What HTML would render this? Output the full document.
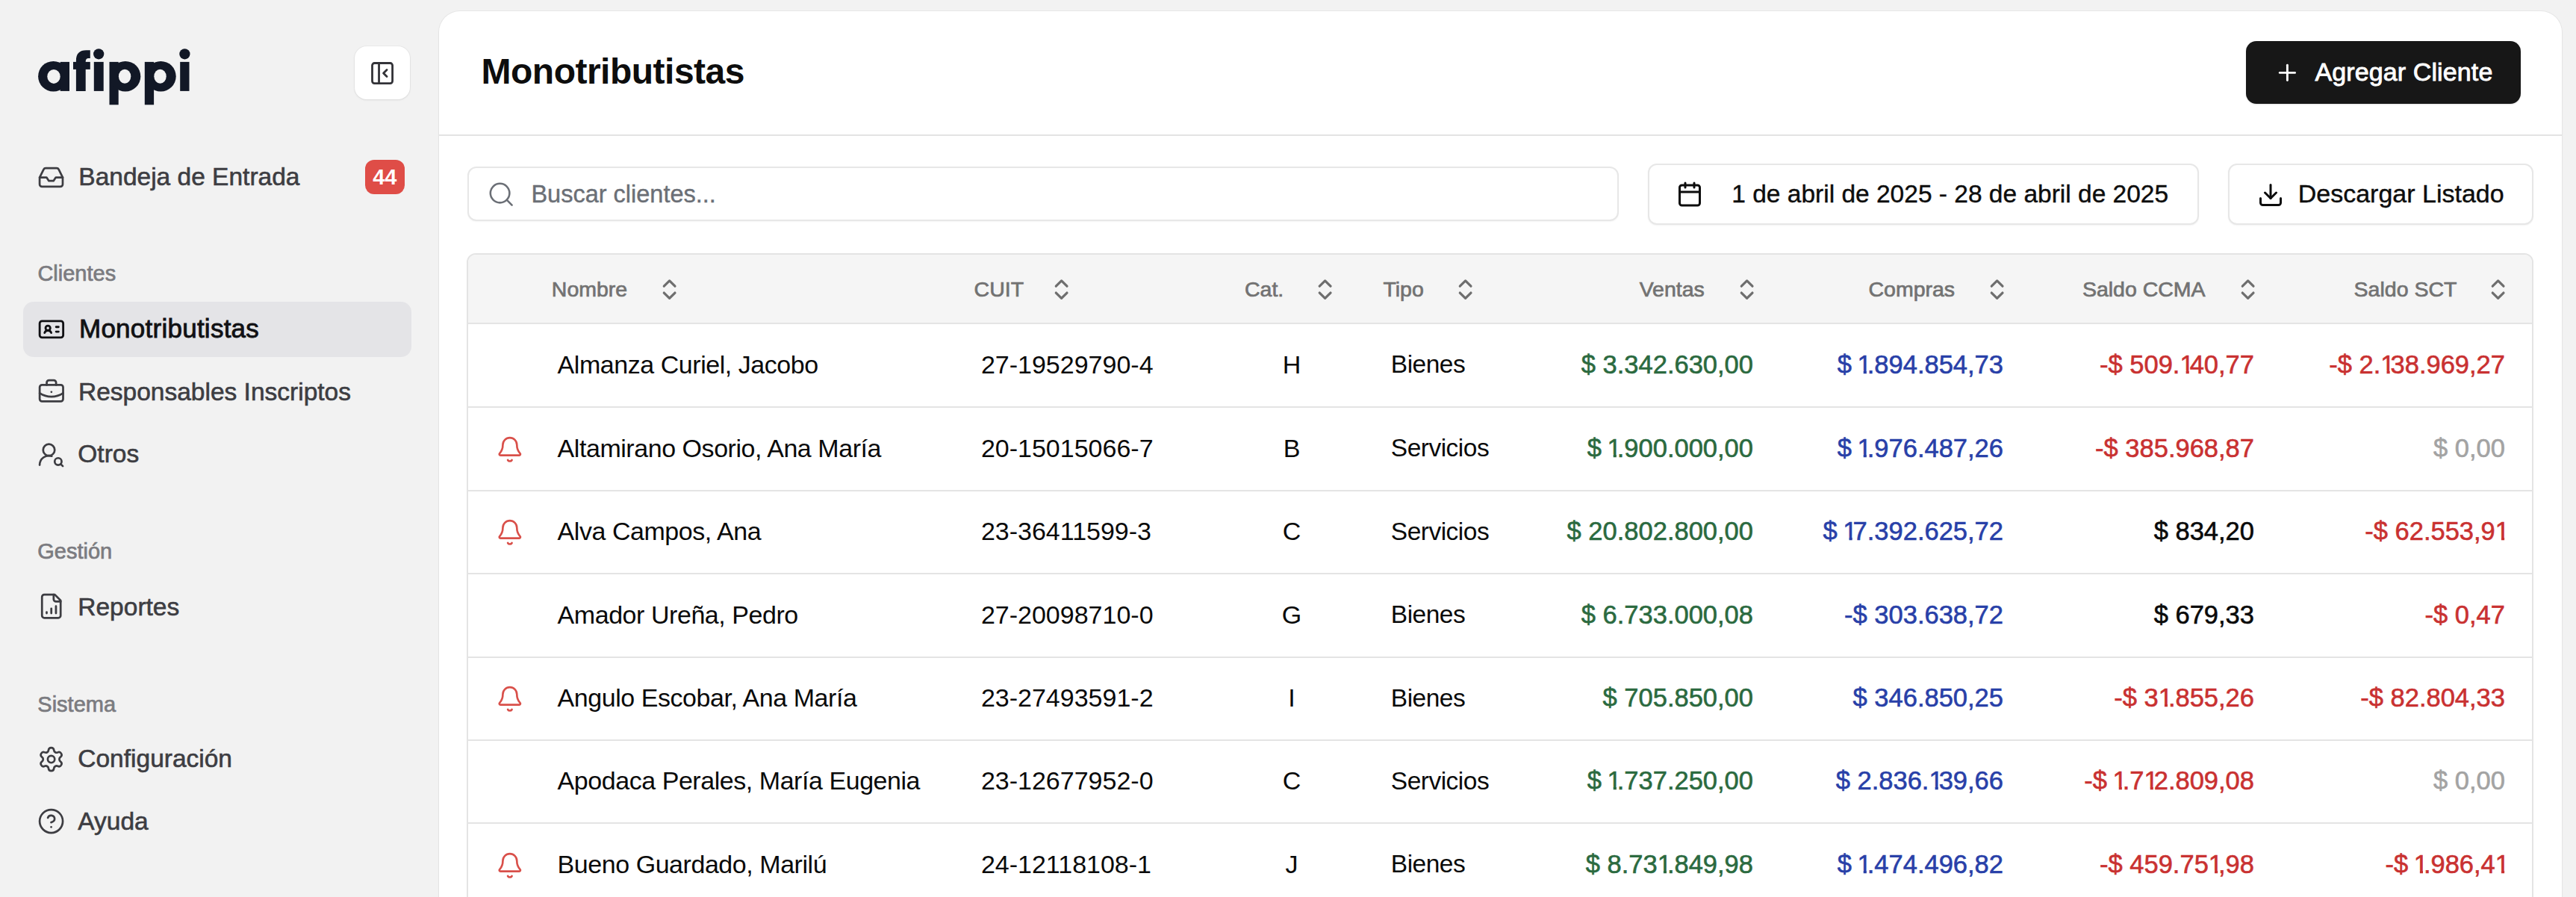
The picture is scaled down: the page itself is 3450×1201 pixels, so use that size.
<!DOCTYPE html>
<html><head><meta charset="utf-8"><title>afippi - Monotributistas</title>
<style>
html,body{margin:0;padding:0;}
body{width:3450px;height:1201px;overflow:hidden;position:relative;background:#f2f2f2;font-family:"Liberation Sans", sans-serif;}
.t{position:absolute;white-space:nowrap;line-height:1;}
.ic{position:absolute;overflow:visible;}
.box{position:absolute;box-sizing:border-box;}
.n1{display:inline-block;letter-spacing:-6px;clip-path:polygon(0 0,12.3px 0,12.3px 40px,8.2px 40px,8.2px 25.4px,0 25.4px);}
.sp{margin-left:-2px;}
</style></head><body>
<svg class="ic" style="left:0;top:0;width:300px;height:160px" viewBox="0 0 300 160">
<g fill="#121826">
<ellipse cx="71.5" cy="102.2" rx="20.4" ry="20.3"/>
<rect x="80.7" y="82.9" width="12.3" height="39"/>
<path d="M101.9,121.9 V81 Q101.9,67.3 115.5,67.3 H120.8 V78 H118.5 Q114.7,78 114.7,82.5 V121.9 Z"/>
<rect x="98" y="82.9" width="22.8" height="10"/>
<rect x="125.8" y="82.9" width="12.9" height="39"/>
<circle cx="132.2" cy="72.3" r="7.1"/>
<rect x="146.5" y="82.9" width="12.2" height="57.4"/>
<ellipse cx="167.9" cy="102.2" rx="20.4" ry="20.3"/>
<rect x="193.8" y="82.9" width="12.3" height="57.4"/>
<ellipse cx="215.3" cy="102.2" rx="20.4" ry="20.3"/>
<rect x="241.2" y="82.9" width="12.3" height="39"/>
<circle cx="247.4" cy="72.3" r="7.1"/>
</g>
<g fill="#f2f2f2">
<ellipse cx="72" cy="102.4" rx="8.7" ry="9.5"/>
<ellipse cx="167.1" cy="102.3" rx="8.2" ry="9.5"/>
<ellipse cx="214.5" cy="102.3" rx="8.2" ry="9.5"/>
</g>
</svg>
<div class="box" style="left:475px;top:62px;width:74px;height:71px;background:#fff;border-radius:16px;box-shadow:0 1px 3px rgba(0,0,0,0.08),0 0 0 1px rgba(0,0,0,0.03)"></div>
<svg class="ic" style="left:493.70px;top:79.90px;width:36.12px;height:36.12px" viewBox="0 0 24 24" fill="none" stroke="#333338" stroke-width="1.86" stroke-linecap="round" stroke-linejoin="round"><rect width="18" height="18" x="3" y="3" rx="2"/><path d="M9 3v18"/><path d="m16 15-3-3 3-3"/></svg>
<svg class="ic" style="left:49.80px;top:218.50px;width:37.08px;height:37.08px" viewBox="0 0 24 24" fill="none" stroke="#3d3d42" stroke-width="1.75" stroke-linecap="round" stroke-linejoin="round"><polyline points="22 12 16 12 14 15 10 15 8 12 2 12"/><path d="M5.45 5.11 2 12v6a2 2 0 0 0 2 2h16a2 2 0 0 0 2-2v-6l-3.45-6.89A2 2 0 0 0 16.76 4H7.24a2 2 0 0 0-1.79 1.11z"/></svg>
<div class="t" style="top:219.84px;font-size:33.5px;color:#3d3d42;font-weight:400;-webkit-text-stroke:0.6px #3d3d42;left:105.30px;">Bandeja de Entrada</div>
<div class="box" style="left:489px;top:214px;width:53px;height:46px;background:#df4d47;border-radius:12px"></div>
<div class="t" style="top:223.25px;font-size:29px;color:#fff;font-weight:700;left:15.30px;width:1000px;text-align:center;">44</div>
<div class="t" style="top:352.25px;font-size:29px;color:#7b7b80;font-weight:400;-webkit-text-stroke:0.7px #7b7b80;left:50.40px;">Clientes</div>
<div class="t" style="top:724.45px;font-size:29px;color:#7b7b80;font-weight:400;-webkit-text-stroke:0.7px #7b7b80;left:50.30px;">Gestión</div>
<div class="t" style="top:929.45px;font-size:29px;color:#7b7b80;font-weight:400;-webkit-text-stroke:0.7px #7b7b80;left:50.30px;">Sistema</div>
<div class="box" style="left:31px;top:404px;width:520px;height:74px;background:#e4e4e7;border-radius:14px"></div>
<svg class="ic" style="left:49.80px;top:422.40px;width:37.80px;height:37.80px" viewBox="0 0 24 24" fill="none" stroke="#111114" stroke-width="1.8" stroke-linecap="round" stroke-linejoin="round"><path d="M16 10h2"/><path d="M16 14h2"/><path d="M6.17 15a3 3 0 0 1 5.66 0"/><circle cx="9" cy="11" r="2"/><rect x="2" y="5" width="20" height="14" rx="2"/></svg>
<div class="t" style="top:422.37px;font-size:35px;color:#111114;font-weight:400;-webkit-text-stroke:0.85px #111114;letter-spacing:0.25px;left:106.00px;">Monotributistas</div>
<svg class="ic" style="left:49.80px;top:505.90px;width:37.68px;height:37.68px" viewBox="0 0 24 24" fill="none" stroke="#3d3d42" stroke-width="1.75" stroke-linecap="round" stroke-linejoin="round"><path d="M12 12h.01"/><path d="M16 6V4a2 2 0 0 0-2-2h-4a2 2 0 0 0-2 2v2"/><path d="M22 13a18.15 18.15 0 0 1-20 0"/><rect width="20" height="14" x="2" y="6" rx="2"/></svg>
<div class="t" style="top:507.54px;font-size:33.5px;color:#3d3d42;font-weight:400;-webkit-text-stroke:0.6px #3d3d42;left:105.00px;">Responsables Inscriptos</div>
<svg class="ic" style="left:50.10px;top:589.90px;width:37.20px;height:37.20px" viewBox="0 0 24 24" fill="none" stroke="#3d3d42" stroke-width="1.75" stroke-linecap="round" stroke-linejoin="round"><circle cx="10" cy="8" r="5"/><path d="M2 21a8 8 0 0 1 10.434-7.62"/><circle cx="18" cy="18" r="3"/><path d="m22 22-1.9-1.9"/></svg>
<div class="t" style="top:591.44px;font-size:33.5px;color:#3d3d42;font-weight:400;-webkit-text-stroke:0.6px #3d3d42;left:104.30px;">Otros</div>
<svg class="ic" style="left:49.80px;top:793.30px;width:37.44px;height:37.44px" viewBox="0 0 24 24" fill="none" stroke="#3d3d42" stroke-width="1.75" stroke-linecap="round" stroke-linejoin="round"><path d="M15 2H6a2 2 0 0 0-2 2v16a2 2 0 0 0 2 2h12a2 2 0 0 0 2-2V7Z"/><path d="M14 2v4a2 2 0 0 0 2 2h4"/><path d="M8 18v-1"/><path d="M12 18v-4"/><path d="M16 18v-6"/></svg>
<div class="t" style="top:795.64px;font-size:33.5px;color:#3d3d42;font-weight:400;-webkit-text-stroke:0.6px #3d3d42;left:104.30px;">Reportes</div>
<svg class="ic" style="left:50.00px;top:997.70px;width:37.20px;height:37.20px" viewBox="0 0 24 24" fill="none" stroke="#3d3d42" stroke-width="1.75" stroke-linecap="round" stroke-linejoin="round"><path d="M9.671 4.136a2.34 2.34 0 0 1 4.659 0 2.34 2.34 0 0 0 3.319 1.915 2.34 2.34 0 0 1 2.33 4.033 2.34 2.34 0 0 0 0 3.831 2.34 2.34 0 0 1-2.33 4.033 2.34 2.34 0 0 0-3.319 1.915 2.34 2.34 0 0 1-4.659 0 2.34 2.34 0 0 0-3.32-1.915 2.34 2.34 0 0 1-2.33-4.033 2.34 2.34 0 0 0 0-3.831A2.34 2.34 0 0 1 6.35 6.051a2.34 2.34 0 0 0 3.319-1.915"/><circle cx="12" cy="12" r="3"/></svg>
<div class="t" style="top:998.94px;font-size:33.5px;color:#3d3d42;font-weight:400;-webkit-text-stroke:0.6px #3d3d42;left:104.30px;">Configuración</div>
<svg class="ic" style="left:49.90px;top:1081.40px;width:37.20px;height:37.20px" viewBox="0 0 24 24" fill="none" stroke="#3d3d42" stroke-width="1.75" stroke-linecap="round" stroke-linejoin="round"><circle cx="12" cy="12" r="10"/><path d="M9.09 9a3 3 0 0 1 5.83 1c0 2-3 3-3 3"/><path d="M12 17h.01"/></svg>
<div class="t" style="top:1082.64px;font-size:33.5px;color:#3d3d42;font-weight:400;-webkit-text-stroke:0.6px #3d3d42;left:104.30px;">Ayuda</div>
<div class="box" style="left:588px;top:15px;width:2843px;height:1300px;background:#fff;border-radius:28px;box-shadow:0 0 0 1px rgba(0,0,0,0.045),0 1px 3px rgba(0,0,0,0.04)"></div>
<div class="t" style="top:72.16px;font-size:48px;color:#0d0d0d;font-weight:700;letter-spacing:-0.5px;left:644.50px;">Monotributistas</div>
<div class="box" style="left:3008px;top:55px;width:368px;height:84px;background:#171717;border-radius:14px;box-shadow:0 1px 2px rgba(0,0,0,0.12)"></div>
<svg class="ic" style="left:3045.90px;top:80.10px;width:34.80px;height:34.80px" viewBox="0 0 24 24" fill="none" stroke="#fff" stroke-width="2" stroke-linecap="round" stroke-linejoin="round"><path d="M5 12h14"/><path d="M12 5v14"/></svg>
<div class="t" style="top:79.31px;font-size:34px;color:#fff;font-weight:400;-webkit-text-stroke:0.85px #fff;letter-spacing:0.12px;left:3100.40px;">Agregar Cliente</div>
<div class="box" style="left:588px;top:180px;width:2843px;height:2px;background:#e3e3e3"></div>
<div class="box" style="left:626px;top:223px;width:1542px;height:73px;background:#fff;border:2px solid #e7e7e7;border-radius:12px;box-shadow:0 1px 2px rgba(0,0,0,0.04)"></div>
<svg class="ic" style="left:652.20px;top:240.60px;width:38.40px;height:38.40px" viewBox="0 0 24 24" fill="none" stroke="#6b6f76" stroke-width="1.6" stroke-linecap="round" stroke-linejoin="round"><circle cx="11" cy="11" r="8"/><path d="m21 21-4.3-4.3"/></svg>
<div class="t" style="top:244.08px;font-size:32.5px;color:#6b6f76;font-weight:400;-webkit-text-stroke:0.4px #6b6f76;left:711.40px;">Buscar clientes...</div>
<div class="box" style="left:2207px;top:219px;width:738px;height:82px;background:#fff;border:2px solid #e7e7e7;border-radius:12px;box-shadow:0 1px 2px rgba(0,0,0,0.05)"></div>
<svg class="ic" style="left:2245.40px;top:242.40px;width:36.00px;height:36.00px" viewBox="0 0 24 24" fill="none" stroke="#0d0d0d" stroke-width="2" stroke-linecap="round" stroke-linejoin="round"><path d="M8 2v4"/><path d="M16 2v4"/><rect width="18" height="18" x="3" y="4" rx="2"/><path d="M3 10h18"/></svg>
<div class="t" style="top:242.64px;font-size:33.5px;color:#0d0d0d;font-weight:400;-webkit-text-stroke:0.4px #0d0d0d;left:2319.30px;">1 de abril de 2025 - 28 de abril de 2025</div>
<div class="box" style="left:2984px;top:219px;width:409px;height:82px;background:#fff;border:2px solid #e7e7e7;border-radius:12px;box-shadow:0 1px 2px rgba(0,0,0,0.05)"></div>
<svg class="ic" style="left:3022.60px;top:242.50px;width:36.00px;height:36.00px" viewBox="0 0 24 24" fill="none" stroke="#0d0d0d" stroke-width="2" stroke-linecap="round" stroke-linejoin="round"><path d="M21 15v4a2 2 0 0 1-2 2H5a2 2 0 0 1-2-2v-4"/><polyline points="7 10 12 15 17 10"/><line x1="12" x2="12" y1="15" y2="3"/></svg>
<div class="t" style="top:242.11px;font-size:34px;color:#0d0d0d;font-weight:400;-webkit-text-stroke:0.4px #0d0d0d;left:3077.70px;">Descargar Listado</div>
<div class="box" style="left:625px;top:339px;width:2768px;height:900px;background:#fff;border:2px solid #e4e4e4;border-radius:12px;overflow:hidden"><div style="position:absolute;left:0;top:0;right:0;height:92px;background:#f5f5f5"></div></div>
<div class="box" style="left:627px;top:432px;width:2764px;height:2px;background:#e4e4e4"></div>
<div class="box" style="left:627px;top:544px;width:2764px;height:2px;background:#e4e4e4"></div>
<div class="box" style="left:627px;top:656px;width:2764px;height:2px;background:#e4e4e4"></div>
<div class="box" style="left:627px;top:767px;width:2764px;height:2px;background:#e4e4e4"></div>
<div class="box" style="left:627px;top:879px;width:2764px;height:2px;background:#e4e4e4"></div>
<div class="box" style="left:627px;top:990px;width:2764px;height:2px;background:#e4e4e4"></div>
<div class="box" style="left:627px;top:1101px;width:2764px;height:2px;background:#e4e4e4"></div>
<div class="t" style="top:372.77px;font-size:28.5px;color:#727272;font-weight:400;-webkit-text-stroke:0.7px #727272;left:738.80px;">Nombre</div>
<svg class="ic" style="left:879.06px;top:369.76px;width:35.28px;height:35.28px" viewBox="0 0 24 24" fill="none" stroke="#6e6e6e" stroke-width="2.2" stroke-linecap="round" stroke-linejoin="round"><path d="m7 15 5 5 5-5"/><path d="m7 9 5-5 5 5"/></svg>
<div class="t" style="top:372.77px;font-size:28.5px;color:#727272;font-weight:400;-webkit-text-stroke:0.7px #727272;left:1304.60px;">CUIT</div>
<svg class="ic" style="left:1404.36px;top:369.76px;width:35.28px;height:35.28px" viewBox="0 0 24 24" fill="none" stroke="#6e6e6e" stroke-width="2.2" stroke-linecap="round" stroke-linejoin="round"><path d="m7 15 5 5 5-5"/><path d="m7 9 5-5 5 5"/></svg>
<div class="t" style="top:372.77px;font-size:28.5px;color:#727272;font-weight:400;-webkit-text-stroke:0.7px #727272;left:1667.00px;">Cat.</div>
<svg class="ic" style="left:1756.86px;top:369.76px;width:35.28px;height:35.28px" viewBox="0 0 24 24" fill="none" stroke="#6e6e6e" stroke-width="2.2" stroke-linecap="round" stroke-linejoin="round"><path d="m7 15 5 5 5-5"/><path d="m7 9 5-5 5 5"/></svg>
<div class="t" style="top:372.77px;font-size:28.5px;color:#727272;font-weight:400;-webkit-text-stroke:0.7px #727272;left:1852.40px;">Tipo</div>
<svg class="ic" style="left:1944.96px;top:369.76px;width:35.28px;height:35.28px" viewBox="0 0 24 24" fill="none" stroke="#6e6e6e" stroke-width="2.2" stroke-linecap="round" stroke-linejoin="round"><path d="m7 15 5 5 5-5"/><path d="m7 9 5-5 5 5"/></svg>
<div class="t" style="top:372.77px;font-size:28.5px;color:#727272;font-weight:400;-webkit-text-stroke:0.7px #727272;right:1167.20px;">Ventas</div>
<svg class="ic" style="left:2321.66px;top:369.76px;width:35.28px;height:35.28px" viewBox="0 0 24 24" fill="none" stroke="#6e6e6e" stroke-width="2.2" stroke-linecap="round" stroke-linejoin="round"><path d="m7 15 5 5 5-5"/><path d="m7 9 5-5 5 5"/></svg>
<div class="t" style="top:372.77px;font-size:28.5px;color:#727272;font-weight:400;-webkit-text-stroke:0.7px #727272;right:831.90px;">Compras</div>
<svg class="ic" style="left:2656.76px;top:369.76px;width:35.28px;height:35.28px" viewBox="0 0 24 24" fill="none" stroke="#6e6e6e" stroke-width="2.2" stroke-linecap="round" stroke-linejoin="round"><path d="m7 15 5 5 5-5"/><path d="m7 9 5-5 5 5"/></svg>
<div class="t" style="top:372.77px;font-size:28.5px;color:#727272;font-weight:400;-webkit-text-stroke:0.7px #727272;right:496.40px;">Saldo CCMA</div>
<svg class="ic" style="left:2992.76px;top:369.76px;width:35.28px;height:35.28px" viewBox="0 0 24 24" fill="none" stroke="#6e6e6e" stroke-width="2.2" stroke-linecap="round" stroke-linejoin="round"><path d="m7 15 5 5 5-5"/><path d="m7 9 5-5 5 5"/></svg>
<div class="t" style="top:372.77px;font-size:28.5px;color:#727272;font-weight:400;-webkit-text-stroke:0.7px #727272;right:159.60px;">Saldo SCT</div>
<svg class="ic" style="left:3327.86px;top:369.76px;width:35.28px;height:35.28px" viewBox="0 0 24 24" fill="none" stroke="#6e6e6e" stroke-width="2.2" stroke-linecap="round" stroke-linejoin="round"><path d="m7 15 5 5 5-5"/><path d="m7 9 5-5 5 5"/></svg>
<div class="t" style="top:470.71px;font-size:34px;color:#0a0a0a;font-weight:400;letter-spacing:-0.45px;left:746.60px;">Almanza Curiel, Jacobo</div>
<div class="t" style="top:470.71px;font-size:34px;color:#0a0a0a;font-weight:400;left:1313.90px;">27-19529790-4</div>
<div class="t" style="top:470.71px;font-size:34px;color:#0a0a0a;font-weight:400;left:1230.00px;width:1000px;text-align:center;">H</div>
<div class="t" style="top:471.14px;font-size:33.5px;color:#0a0a0a;font-weight:400;letter-spacing:-0.5px;left:1862.80px;">Bienes</div>
<div class="t" style="top:470.89px;font-size:34.5px;color:#2b6a3f;font-weight:400;-webkit-text-stroke:0.6px #2b6a3f;right:1102.00px;">$ 3.342.630,00</div>
<div class="t" style="top:470.89px;font-size:34.5px;color:#2840a8;font-weight:400;-webkit-text-stroke:0.6px #2840a8;right:767.00px;">$ <span class="n1 sp">1</span>.894.854,73</div>
<div class="t" style="top:470.89px;font-size:34.5px;color:#c93131;font-weight:400;-webkit-text-stroke:0.6px #c93131;right:431.00px;">-$ 509.<span class="n1">1</span>40,77</div>
<div class="t" style="top:470.89px;font-size:34.5px;color:#c93131;font-weight:400;-webkit-text-stroke:0.6px #c93131;right:95.00px;">-$ 2.<span class="n1">1</span>38.969,27</div>
<svg class="ic" style="left:663.90px;top:582.70px;width:37.68px;height:37.68px" viewBox="0 0 24 24" fill="none" stroke="#d9504a" stroke-width="1.7" stroke-linecap="round" stroke-linejoin="round"><path d="M10.268 21a2 2 0 0 0 3.464 0"/><path d="M3.262 15.326A1 1 0 0 0 4 17h16a1 1 0 0 0 .74-1.673C19.41 13.956 18 12.499 18 8A6 6 0 0 0 6 8c0 4.499-1.411 5.956-2.738 7.326"/></svg>
<div class="t" style="top:582.71px;font-size:34px;color:#0a0a0a;font-weight:400;letter-spacing:-0.45px;left:746.60px;">Altamirano Osorio, Ana María</div>
<div class="t" style="top:582.71px;font-size:34px;color:#0a0a0a;font-weight:400;left:1313.90px;">20-15015066-7</div>
<div class="t" style="top:582.71px;font-size:34px;color:#0a0a0a;font-weight:400;left:1230.00px;width:1000px;text-align:center;">B</div>
<div class="t" style="top:583.14px;font-size:33.5px;color:#0a0a0a;font-weight:400;letter-spacing:-0.5px;left:1862.80px;">Servicios</div>
<div class="t" style="top:582.89px;font-size:34.5px;color:#2b6a3f;font-weight:400;-webkit-text-stroke:0.6px #2b6a3f;right:1102.00px;">$ <span class="n1 sp">1</span>.900.000,00</div>
<div class="t" style="top:582.89px;font-size:34.5px;color:#2840a8;font-weight:400;-webkit-text-stroke:0.6px #2840a8;right:767.00px;">$ <span class="n1 sp">1</span>.976.487,26</div>
<div class="t" style="top:582.89px;font-size:34.5px;color:#c93131;font-weight:400;-webkit-text-stroke:0.6px #c93131;right:431.00px;">-$ 385.968,87</div>
<div class="t" style="top:582.89px;font-size:34.5px;color:#a3a3a3;font-weight:400;-webkit-text-stroke:0.6px #a3a3a3;right:95.00px;">$ 0,00</div>
<svg class="ic" style="left:663.90px;top:694.20px;width:37.68px;height:37.68px" viewBox="0 0 24 24" fill="none" stroke="#d9504a" stroke-width="1.7" stroke-linecap="round" stroke-linejoin="round"><path d="M10.268 21a2 2 0 0 0 3.464 0"/><path d="M3.262 15.326A1 1 0 0 0 4 17h16a1 1 0 0 0 .74-1.673C19.41 13.956 18 12.499 18 8A6 6 0 0 0 6 8c0 4.499-1.411 5.956-2.738 7.326"/></svg>
<div class="t" style="top:694.21px;font-size:34px;color:#0a0a0a;font-weight:400;letter-spacing:-0.45px;left:746.60px;">Alva Campos, Ana</div>
<div class="t" style="top:694.21px;font-size:34px;color:#0a0a0a;font-weight:400;left:1313.90px;">23-36411599-3</div>
<div class="t" style="top:694.21px;font-size:34px;color:#0a0a0a;font-weight:400;left:1230.00px;width:1000px;text-align:center;">C</div>
<div class="t" style="top:694.64px;font-size:33.5px;color:#0a0a0a;font-weight:400;letter-spacing:-0.5px;left:1862.80px;">Servicios</div>
<div class="t" style="top:694.39px;font-size:34.5px;color:#2b6a3f;font-weight:400;-webkit-text-stroke:0.6px #2b6a3f;right:1102.00px;">$ 20.802.800,00</div>
<div class="t" style="top:694.39px;font-size:34.5px;color:#2840a8;font-weight:400;-webkit-text-stroke:0.6px #2840a8;right:767.00px;">$ <span class="n1 sp">1</span>7.392.625,72</div>
<div class="t" style="top:694.39px;font-size:34.5px;color:#0a0a0a;font-weight:400;-webkit-text-stroke:0.6px #0a0a0a;right:431.00px;">$ 834,20</div>
<div class="t" style="top:694.39px;font-size:34.5px;color:#c93131;font-weight:400;-webkit-text-stroke:0.6px #c93131;right:95.00px;">-$ 62.553,9<span class="n1">1</span></div>
<div class="t" style="top:805.71px;font-size:34px;color:#0a0a0a;font-weight:400;letter-spacing:-0.45px;left:746.60px;">Amador Ureña, Pedro</div>
<div class="t" style="top:805.71px;font-size:34px;color:#0a0a0a;font-weight:400;left:1313.90px;">27-20098710-0</div>
<div class="t" style="top:805.71px;font-size:34px;color:#0a0a0a;font-weight:400;left:1230.00px;width:1000px;text-align:center;">G</div>
<div class="t" style="top:806.14px;font-size:33.5px;color:#0a0a0a;font-weight:400;letter-spacing:-0.5px;left:1862.80px;">Bienes</div>
<div class="t" style="top:805.89px;font-size:34.5px;color:#2b6a3f;font-weight:400;-webkit-text-stroke:0.6px #2b6a3f;right:1102.00px;">$ 6.733.000,08</div>
<div class="t" style="top:805.89px;font-size:34.5px;color:#2840a8;font-weight:400;-webkit-text-stroke:0.6px #2840a8;right:767.00px;">-$ 303.638,72</div>
<div class="t" style="top:805.89px;font-size:34.5px;color:#0a0a0a;font-weight:400;-webkit-text-stroke:0.6px #0a0a0a;right:431.00px;">$ 679,33</div>
<div class="t" style="top:805.89px;font-size:34.5px;color:#c93131;font-weight:400;-webkit-text-stroke:0.6px #c93131;right:95.00px;">-$ 0,47</div>
<svg class="ic" style="left:663.90px;top:917.20px;width:37.68px;height:37.68px" viewBox="0 0 24 24" fill="none" stroke="#d9504a" stroke-width="1.7" stroke-linecap="round" stroke-linejoin="round"><path d="M10.268 21a2 2 0 0 0 3.464 0"/><path d="M3.262 15.326A1 1 0 0 0 4 17h16a1 1 0 0 0 .74-1.673C19.41 13.956 18 12.499 18 8A6 6 0 0 0 6 8c0 4.499-1.411 5.956-2.738 7.326"/></svg>
<div class="t" style="top:917.21px;font-size:34px;color:#0a0a0a;font-weight:400;letter-spacing:-0.45px;left:746.60px;">Angulo Escobar, Ana María</div>
<div class="t" style="top:917.21px;font-size:34px;color:#0a0a0a;font-weight:400;left:1313.90px;">23-27493591-2</div>
<div class="t" style="top:917.21px;font-size:34px;color:#0a0a0a;font-weight:400;left:1230.00px;width:1000px;text-align:center;">I</div>
<div class="t" style="top:917.64px;font-size:33.5px;color:#0a0a0a;font-weight:400;letter-spacing:-0.5px;left:1862.80px;">Bienes</div>
<div class="t" style="top:917.39px;font-size:34.5px;color:#2b6a3f;font-weight:400;-webkit-text-stroke:0.6px #2b6a3f;right:1102.00px;">$ 705.850,00</div>
<div class="t" style="top:917.39px;font-size:34.5px;color:#2840a8;font-weight:400;-webkit-text-stroke:0.6px #2840a8;right:767.00px;">$ 346.850,25</div>
<div class="t" style="top:917.39px;font-size:34.5px;color:#c93131;font-weight:400;-webkit-text-stroke:0.6px #c93131;right:431.00px;">-$ 3<span class="n1">1</span>.855,26</div>
<div class="t" style="top:917.39px;font-size:34.5px;color:#c93131;font-weight:400;-webkit-text-stroke:0.6px #c93131;right:95.00px;">-$ 82.804,33</div>
<div class="t" style="top:1028.21px;font-size:34px;color:#0a0a0a;font-weight:400;letter-spacing:-0.45px;left:746.60px;">Apodaca Perales, María Eugenia</div>
<div class="t" style="top:1028.21px;font-size:34px;color:#0a0a0a;font-weight:400;left:1313.90px;">23-12677952-0</div>
<div class="t" style="top:1028.21px;font-size:34px;color:#0a0a0a;font-weight:400;left:1230.00px;width:1000px;text-align:center;">C</div>
<div class="t" style="top:1028.64px;font-size:33.5px;color:#0a0a0a;font-weight:400;letter-spacing:-0.5px;left:1862.80px;">Servicios</div>
<div class="t" style="top:1028.39px;font-size:34.5px;color:#2b6a3f;font-weight:400;-webkit-text-stroke:0.6px #2b6a3f;right:1102.00px;">$ <span class="n1 sp">1</span>.737.250,00</div>
<div class="t" style="top:1028.39px;font-size:34.5px;color:#2840a8;font-weight:400;-webkit-text-stroke:0.6px #2840a8;right:767.00px;">$ 2.836.<span class="n1">1</span>39,66</div>
<div class="t" style="top:1028.39px;font-size:34.5px;color:#c93131;font-weight:400;-webkit-text-stroke:0.6px #c93131;right:431.00px;">-$ <span class="n1 sp">1</span>.7<span class="n1">1</span>2.809,08</div>
<div class="t" style="top:1028.39px;font-size:34.5px;color:#a3a3a3;font-weight:400;-webkit-text-stroke:0.6px #a3a3a3;right:95.00px;">$ 0,00</div>
<svg class="ic" style="left:663.90px;top:1139.70px;width:37.68px;height:37.68px" viewBox="0 0 24 24" fill="none" stroke="#d9504a" stroke-width="1.7" stroke-linecap="round" stroke-linejoin="round"><path d="M10.268 21a2 2 0 0 0 3.464 0"/><path d="M3.262 15.326A1 1 0 0 0 4 17h16a1 1 0 0 0 .74-1.673C19.41 13.956 18 12.499 18 8A6 6 0 0 0 6 8c0 4.499-1.411 5.956-2.738 7.326"/></svg>
<div class="t" style="top:1139.71px;font-size:34px;color:#0a0a0a;font-weight:400;letter-spacing:-0.45px;left:746.60px;">Bueno Guardado, Marilú</div>
<div class="t" style="top:1139.71px;font-size:34px;color:#0a0a0a;font-weight:400;left:1313.90px;">24-12118108-1</div>
<div class="t" style="top:1139.71px;font-size:34px;color:#0a0a0a;font-weight:400;left:1230.00px;width:1000px;text-align:center;">J</div>
<div class="t" style="top:1140.14px;font-size:33.5px;color:#0a0a0a;font-weight:400;letter-spacing:-0.5px;left:1862.80px;">Bienes</div>
<div class="t" style="top:1139.89px;font-size:34.5px;color:#2b6a3f;font-weight:400;-webkit-text-stroke:0.6px #2b6a3f;right:1102.00px;">$ 8.73<span class="n1">1</span>.849,98</div>
<div class="t" style="top:1139.89px;font-size:34.5px;color:#2840a8;font-weight:400;-webkit-text-stroke:0.6px #2840a8;right:767.00px;">$ <span class="n1 sp">1</span>.474.496,82</div>
<div class="t" style="top:1139.89px;font-size:34.5px;color:#c93131;font-weight:400;-webkit-text-stroke:0.6px #c93131;right:431.00px;">-$ 459.75<span class="n1">1</span>,98</div>
<div class="t" style="top:1139.89px;font-size:34.5px;color:#c93131;font-weight:400;-webkit-text-stroke:0.6px #c93131;right:95.00px;">-$ <span class="n1 sp">1</span>.986,4<span class="n1">1</span></div>
</body></html>
